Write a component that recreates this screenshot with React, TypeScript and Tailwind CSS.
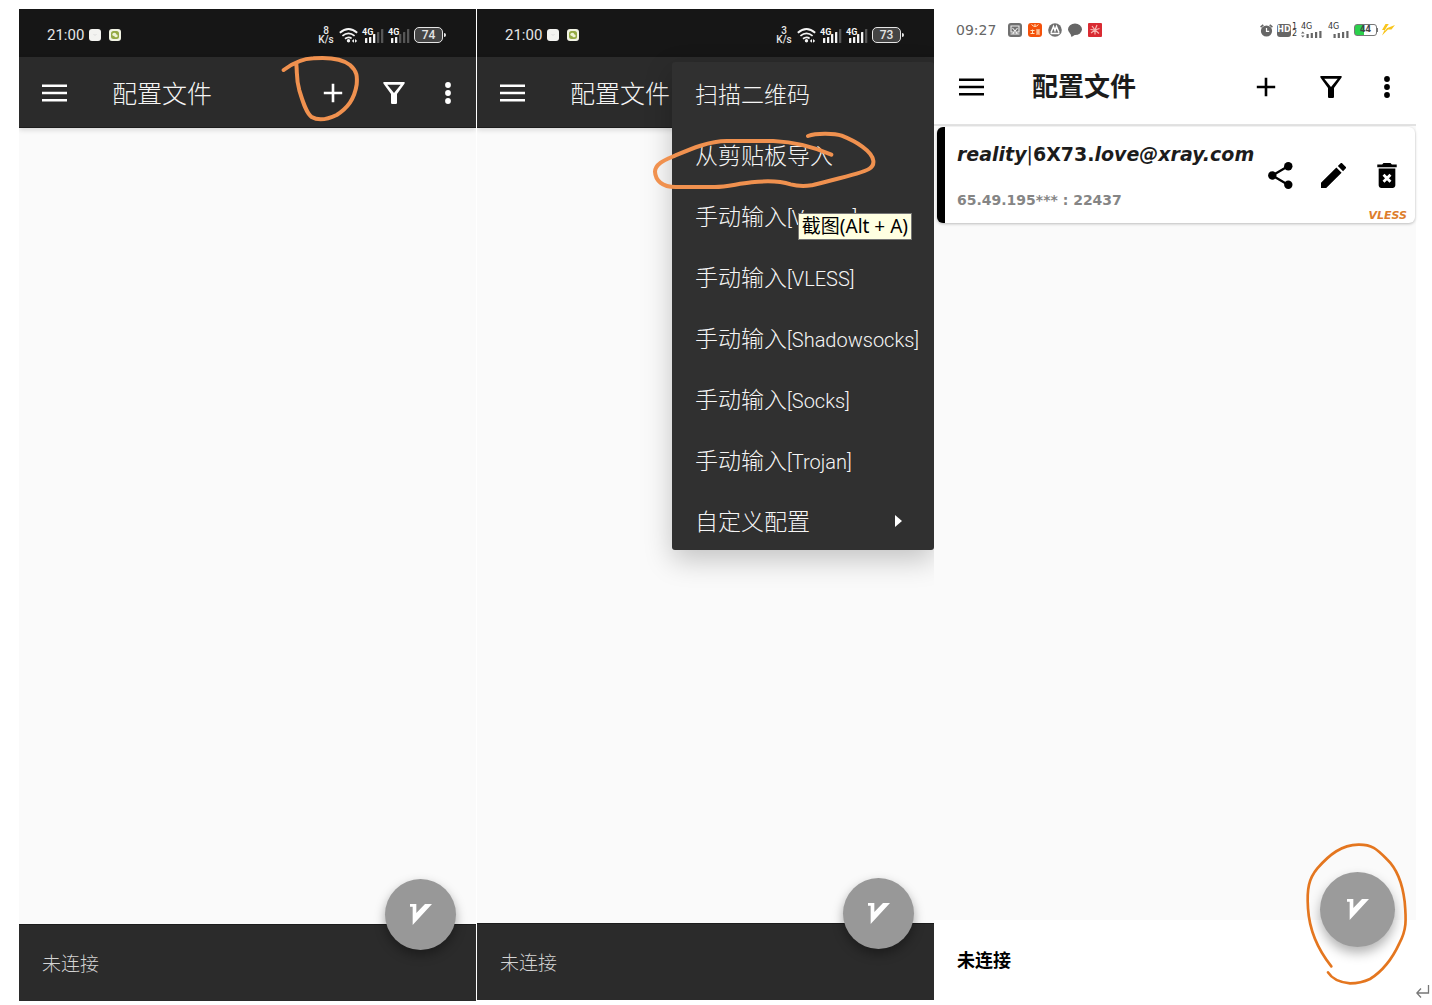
import type { ReactNode } from "react";

const LATIN = "font-['Roboto','Noto_Sans_CJK_SC',sans-serif]";
const BOLD_FACE = "font-['DejaVu_Sans','Noto_Sans_CJK_SC',sans-serif]";

function MenuIcon() {
  return (
    <svg className="w-[26px] h-[18px]" viewBox="0 0 26 18" fill="currentColor" aria-hidden="true">
      <path d="M0 .5h25v2.6H0zM0 7.7h25v2.6H0zM0 14.9h25v2.6H0z" />
    </svg>
  );
}

function PlusIcon() {
  return (
    <svg className="w-5 h-5" viewBox="0 0 20 20" stroke="currentColor" strokeWidth="2.6" aria-hidden="true">
      <path d="M10 .8v18.4M.8 10h18.4" />
    </svg>
  );
}

function FilterIcon() {
  return (
    <svg className="w-[22px] h-[22px]" viewBox="0 0 22 22" fill="currentColor" fillRule="evenodd" aria-hidden="true">
      <path d="M.4 0h21.2v1.6L14 12v9.2l-.8.8H8.8L8 21.200V12L.4 1.600zM4.300 2.700 11 10.900l6.700-8.200z" />
    </svg>
  );
}

function DotsIcon() {
  return (
    <svg className="w-[6px] h-[22px]" viewBox="0 0 6 22" fill="currentColor" aria-hidden="true">
      <circle cx="3" cy="3" r="2.900" />
      <circle cx="3" cy="11" r="2.900" />
      <circle cx="3" cy="19" r="2.900" />
    </svg>
  );
}

function WifiIcon() {
  return (
    <svg className="w-[19px] h-[15px]" viewBox="0 0 19 15" fill="none" stroke="#f4f4f4" strokeWidth="1.800" aria-hidden="true">
      <path d="M.8 4.800Q9.500-2.800 18.200 4.800M3.400 7.900q6.100-5 12.200 0M6 10.800q3.500-2.600 6.600-.4" />
      <circle cx="9.500" cy="12.800" r="1.700" fill="#f4f4f4" stroke="none" />
      <path d="m15 11-2.200 1.900L15 14.800zM16 11l2.200 1.900L16 14.800z" fill="#f4f4f4" stroke="none" />
    </svg>
  );
}

function DarkSignal({ strength }: { strength: number }) {
  const bars = [
    { x: 3, h: 5 },
    { x: 7, h: 6 },
    { x: 11, h: 9 },
    { x: 15, h: 11 },
    { x: 19, h: 14 },
  ];
  return (
    <div className="relative w-[22px] h-[15px]">
      <svg className="w-full h-full" viewBox="0 0 22 15" aria-hidden="true">
        {bars.map((bar, i) => (
          <rect key={bar.x} x={bar.x} y={15 - bar.h} width="2.300" height={bar.h} rx=".5" fill={i < strength ? "#f4f4f4" : "#565656"} />
        ))}
      </svg>
      <span className="absolute left-0 top-0 text-[9px] leading-[8px] font-bold text-neutral-100 bg-[#161616]">4G</span>
    </div>
  );
}

function DarkStatus({ speed, battery, strength }: { speed: string; battery: string; strength: [number, number] }) {
  return (
    <div className="flex h-12 items-center bg-[#161616] pl-7 pr-[30px] pt-1 text-neutral-200">
      <span className="text-[15px]">21:00</span>
      <svg className="ml-[5px] w-3 h-3" viewBox="0 0 12 12" aria-hidden="true">
        <rect width="12" height="12" rx="3" fill="#f3f3f0" />
        <path d="m4.500 5 1.500 1.500L7.500 5" stroke="#ddd" fill="none" />
      </svg>
      <svg className="ml-2 w-3 h-3" viewBox="0 0 12 12" aria-hidden="true">
        <rect width="12" height="12" rx="3" fill="#f1f3e4" />
        <rect x="2" y="2" width="8" height="8" rx="2.500" fill="#95aa45" />
        <ellipse cx="5.300" cy="5.400" rx="2" ry="1.600" fill="#eef3d5" />
        <ellipse cx="7" cy="6.900" rx="1.700" ry="1.300" fill="#eef3d5" />
      </svg>
      <div className="ml-auto flex items-center">
        <div className="flex w-4 flex-col items-center text-[10px] leading-[9px] font-medium">
          <span>{speed}</span>
          <span>K/s</span>
        </div>
        <div className="ml-[5px]"><WifiIcon /></div>
        <div className="ml-1"><DarkSignal strength={strength[0]} /></div>
        <div className="ml-1"><DarkSignal strength={strength[1]} /></div>
        <div className="ml-1 flex items-center">
          <span className="flex h-4 w-[29px] items-center justify-center rounded-[5px] border border-neutral-200 bg-[#444] text-[12px] leading-3 font-medium">
            {battery}
          </span>
          <span className="ml-px h-1 w-[2px] rounded-r bg-neutral-200" />
        </div>
      </div>
    </div>
  );
}

function ConnectButton({ large = false }: { large?: boolean }) {
  return (
    <button
      type="button"
      aria-label="V"
      className={
        large
          ? "absolute right-[21px] bottom-[54px] flex size-[75px] items-center justify-center rounded-full bg-[#9b9b9b] shadow-[0_6px_12px_rgba(0,0,0,0.3)]"
          : "absolute right-5 bottom-[51px] flex size-[71px] items-center justify-center rounded-full bg-[#989898] shadow-[0_5px_11px_rgba(0,0,0,0.35)]"
      }
    >
      <svg className="w-[22px] h-[21px]" viewBox="120 132 66 63" fill="#fff" aria-hidden="true">
        <path d="M120 132h19v27l26-27h21l-58 63v-55h-8z" />
      </svg>
    </button>
  );
}

function DarkPhone({ status, children, className }: { status: ReactNode; children?: ReactNode; className: string }) {
  return (
    <section className={`relative flex min-w-0 flex-[457_1_0%] flex-col overflow-hidden bg-[#fafafa] ${LATIN} ${className}`}>
      {status}
      <header className="flex h-[71px] items-center border-b border-[#1c1c1c] bg-[#2b2b2b] pt-[2px] pl-[23px] pr-[25px] text-white shadow-[0_2px_5px_rgba(0,0,0,0.14)]">
        <button type="button" aria-label="菜单"><MenuIcon /></button>
        <h1 className="ml-11 pt-1 text-[25px] font-light text-neutral-100">配置文件</h1>
        <div className="ml-auto flex items-center">
          <button type="button" aria-label="添加"><PlusIcon /></button>
          <button type="button" aria-label="筛选" className="ml-10"><FilterIcon /></button>
          <button type="button" aria-label="更多" className="ml-10"><DotsIcon /></button>
        </div>
      </header>
      <main className="flex-1" />
      <footer className="flex h-[77px] items-center border-t border-[#1c1c1c] bg-[#2b2b2b] pt-1 pl-[23px] text-[19px] font-light text-neutral-300">
        未连接
      </footer>
      <ConnectButton />
      {children}
    </section>
  );
}

const MENU = [
  { label: "扫描二维码" },
  { label: "从剪贴板导入" },
  { label: "手动输入", kind: "[Vmess]" },
  { label: "手动输入", kind: "[VLESS]" },
  { label: "手动输入", kind: "[Shadowsocks]" },
  { label: "手动输入", kind: "[Socks]" },
  { label: "手动输入", kind: "[Trojan]" },
  { label: "自定义配置", more: true },
];

function AddMenu() {
  return (
    <div className="absolute right-0 top-[53px] w-[262px] rounded-[3px] bg-[#303030] shadow-[0_10px_28px_rgba(0,0,0,0.22)]">
      {MENU.map((item) => (
        <button
          key={item.label + (item.kind ?? "")}
          type="button"
          className="flex h-[61px] w-full items-center whitespace-nowrap pt-[7px] pl-[23px] pr-8 text-[23px] font-light text-neutral-100"
        >
          <span>{item.label}</span>
          {item.kind && <span className="text-[20px]">{item.kind}</span>}
          {item.more && (
            <svg className="mb-1 ml-auto w-[7px] h-3" viewBox="0 0 7 12" fill="#fff" aria-hidden="true">
              <path d="M0 0l7 6-7 6z" />
            </svg>
          )}
        </button>
      ))}
    </div>
  );
}

function LightSignal({ data = false }: { data?: boolean }) {
  return (
    <div className="relative w-[21px] h-[15px]">
      <svg className="w-full h-full" viewBox="0 0 21 15" fill="#666" aria-hidden="true">
        {data && <path d="M0 10.500 1.800 8.500l1.800 2zM0 12.500l1.800 2 1.800-2z" />}
        <rect x="5.500" y="11" width="2.200" height="4" />
        <rect x="9.700" y="10" width="2.200" height="5" />
        <rect x="14" y="9" width="2.200" height="6" />
        <rect x="18.300" y="8" width="2.200" height="7" />
      </svg>
      <span className="absolute left-0 top-0 text-[8px] leading-[8px] text-[#333]">4G</span>
    </div>
  );
}

function LightStatus() {
  return (
    <div className="flex h-[41px] items-center pt-px pl-[22px] pr-[21px] text-[#666]">
      <span className="w-[52px] text-[14px]">09:27</span>
      <div className="flex items-center gap-[6px]">
        <svg className="size-[14px]" viewBox="0 0 14 14" aria-hidden="true">
          <rect width="14" height="14" rx="3" fill="#707070" />
          <path d="M3 3h8v6H3zM4.500 5l5 6M9.500 5l-5 6M2.500 11h9" fill="none" stroke="#eee" strokeWidth="1.100" />
        </svg>
        <svg className="size-[14px]" viewBox="0 0 14 14" aria-hidden="true">
          <rect width="14" height="14" rx="3" fill="#f4510b" />
          <path d="M3.500 1.500q3.500 4 7 0M6 2h2M2.500 7.500h4M4.500 6.500v4M2.500 10.500h4M8 7h4M8 9h4M8 11h4M10 6.500V11" fill="none" stroke="#ffe1bf" />
        </svg>
        <svg className="size-[14px]" viewBox="0 0 14 14" aria-hidden="true">
          <circle cx="7" cy="7" r="6.800" fill="#707070" />
          <path d="m3 9.500 2.500-6 1.500 4 1.500-4 2.500 6M2.500 10.500h9" fill="none" stroke="#fff" strokeWidth="1.500" />
        </svg>
        <svg className="size-[14px]" viewBox="0 0 14 14" fill="#666" aria-hidden="true">
          <ellipse cx="7" cy="6.300" rx="7" ry="5.800" />
          <path d="M2 9.500 3.500 14l4-2.500z" />
        </svg>
        <svg className="size-[14px]" viewBox="0 0 14 14" aria-hidden="true">
          <rect width="14" height="14" rx="1" fill="#d92b32" />
          <path d="M7 7 4 3M7 7l2-5M7 7l4.500-1.500M7 7l4 3.500M7 7v4.500M7 7l-4 3M7 7 2.500 6.500" stroke="#f9b9b4" strokeWidth="1.200" />
        </svg>
      </div>
      <div className="ml-auto flex items-center">
        <svg className="w-[13px] h-[13px]" viewBox="0 0 13 13" aria-hidden="true">
          <circle cx="6.500" cy="7" r="5.600" fill="#666" />
          <path d="M.6 3.200 3.300.8M12.400 3.200 9.700.8" stroke="#666" strokeWidth="1.600" />
          <path d="M6.500 4v3.400h2.700" stroke="#fff" strokeWidth="1.200" fill="none" />
        </svg>
        <span className="ml-1 flex h-[13px] w-[14px] items-center justify-center rounded-[3px] bg-[#666] text-[8px] font-bold text-white">HD</span>
        <span className="ml-px flex flex-col text-[8px] leading-[7px] text-[#333]">
          <span>1</span>
          <span>2</span>
        </span>
        <div className="ml-1"><LightSignal data /></div>
        <div className="ml-[6px]"><LightSignal /></div>
        <span className="ml-[5px] flex h-3 w-[23px] items-center justify-center rounded-[3px] border border-[#777] bg-linear-to-r from-[#2bd04c] from-45% to-white to-45% text-[8px] font-bold leading-[8px] text-[#444]">
          44
        </span>
        <span className="h-1 w-px bg-[#777]" />
        <svg className="ml-1 w-[13px] h-3" viewBox="0 0 13 12" aria-hidden="true">
          <path d="M3.500 0H7L4 4.500 13 1 9.500 5.500H6L0 11.500 2.500 6H0z" fill="#f8c51c" />
          <path d="M7 .3 3 6.500" stroke="#fff" strokeWidth=".8" />
        </svg>
      </div>
    </div>
  );
}

function ProfileCard() {
  return (
    <article className="relative ml-[3px] mr-px mt-px flex h-24 items-center overflow-hidden rounded-md border-l-8 border-black bg-white pl-3 pr-[18px] shadow-[0_1px_3px_rgba(0,0,0,0.25)]">
      <div className="flex flex-col gap-6 whitespace-nowrap pt-[2px]">
        <h2 className="text-[19px] leading-6 font-bold text-[#1c1c1c]">
          <i>reality</i><span className="font-normal">|</span>6X73.<i>love@xray.com</i>
        </h2>
        <p className="text-[14px] leading-5 font-bold text-[#858585]">65.49.195*** : 22437</p>
      </div>
      <div className="ml-auto flex shrink-0 items-center text-black">
        <button type="button" aria-label="分享">
          <svg className="w-[25px] h-[27px]" viewBox="0 0 25 27" fill="currentColor" aria-hidden="true">
            <path d="M20 4.300 4.300 13.500 20 22.700" fill="none" stroke="currentColor" strokeWidth="2.300" />
            <circle cx="20.300" cy="4.300" r="4.200" />
            <circle cx="4.300" cy="13.500" r="4.200" />
            <circle cx="20.300" cy="22.700" r="4.200" />
          </svg>
        </button>
        <button type="button" aria-label="编辑" className="ml-7">
          <svg className="size-[25px]" viewBox="3 3 18 18" fill="currentColor" aria-hidden="true">
            <path d="M3 17.250V21h3.750L17.810 9.940l-3.750-3.750zM20.710 7.040a1 1 0 0 0 0-1.410l-2.340-2.340a1 1 0 0 0-1.410 0l-1.830 1.830 3.750 3.750z" />
          </svg>
        </button>
        <button type="button" aria-label="删除" className="ml-[31px]">
          <svg className="w-5 h-[25px]" viewBox="5 3 14 18" fill="currentColor" aria-hidden="true">
            <path d="M6 19c0 1.100.9 2 2 2h8c1.100 0 2-.9 2-2V7H6zM19 4h-3.500l-1-1h-5l-1 1H5v2h14z" />
            <path d="m9.500 11.500 5 5m0-5-5 5" stroke="#fff" strokeWidth="2" />
          </svg>
        </button>
      </div>
      <span className="absolute bottom-px right-2 text-[11px] leading-3 font-bold italic text-[#dd7d2c]">VLESS</span>
    </article>
  );
}

export default function App() {
  return (
    <div className="flex min-h-screen bg-white pl-[19px] pt-[9px] pb-1">
      <DarkPhone className="mr-px" status={<DarkStatus speed="8" battery="74" strength={[3, 2]} />}>
        <svg className="pointer-events-none absolute right-[116px] top-11 h-[70px] w-20" viewBox="30 160 240 210" fill="none" stroke="#f0914f" strokeWidth="12" strokeLinecap="round" strokeLinejoin="round" aria-hidden="true">
          <path d="M41 211C68 191 95 177 130 176C180 172 215 176 240 196C262 215 262 232 260 255C253 300 232 325 200 346C175 358 145 364 125 352C108 340 98 304 88 272C78 236 82 222 79 194" />
        </svg>
      </DarkPhone>

      <DarkPhone className="mb-px" status={<DarkStatus speed="3" battery="73" strength={[4, 4]} />}>
        <AddMenu />
        <svg className="pointer-events-none absolute right-[54px] top-[119px] h-16 w-[230px]" viewBox="30 384 690 192" fill="none" stroke="#f0914f" strokeWidth="12" strokeLinecap="round" strokeLinejoin="round" aria-hidden="true">
          <path d="M504 408C530 398 585 400 605 407C650 425 696 453 700 482C703 505 680 512 650 521C610 533 560 544 515 556C490 559 470 558 452 553C420 543 370 543 335 547C290 552 260 560 225 561L110 561C65 562 46 540 45 515C46 490 75 480 105 467C145 450 205 423 260 423L400 423C465 426 520 440 574 464" />
        </svg>
        <div role="tooltip" className="absolute right-[22px] top-[204px] whitespace-nowrap border border-[#767676] bg-[#ffffe1] px-[3px] font-['Noto_Sans','Noto_Sans_CJK_SC',sans-serif] text-[19px] leading-[25px] text-black">
          截图(Alt + A)
        </div>
      </DarkPhone>

      <section className={`relative flex min-w-0 flex-[482_1_0%] flex-col bg-white ${BOLD_FACE}`}>
        <LightStatus />
        <header className="flex h-[76px] items-center border-b-2 border-[#e2e2e2] pl-[25px] pr-[26px] text-black">
          <button type="button" aria-label="菜单"><MenuIcon /></button>
          <h1 className="ml-[47px] text-[26px] font-bold text-[#1c1c1c]">配置文件</h1>
          <div className="ml-auto flex items-center">
            <button type="button" aria-label="添加"><PlusIcon /></button>
            <button type="button" aria-label="筛选" className="ml-11"><FilterIcon /></button>
            <button type="button" aria-label="更多" className="ml-[42px]"><DotsIcon /></button>
          </div>
        </header>
        <main className="flex-1 bg-[#fafafa]">
          <ProfileCard />
        </main>
        <footer className="flex h-[81px] items-center bg-white pl-[23px] text-[18px] font-bold text-black">未连接</footer>
        <ConnectButton large />
        <svg className="pointer-events-none absolute right-2 bottom-[11px] h-[150px] w-[105px]" viewBox="39 30 315 450" fill="none" stroke="#e4761f" strokeWidth="8" strokeLinecap="round" strokeLinejoin="round" aria-hidden="true">
          <path d="M124 409C85 360 58 300 54 235C50 175 57 145 82 115C120 72 155 45 205 44C245 43 260 57 290 87C325 120 338 165 344 215C349 270 350 300 328 340C305 390 275 425 240 447C215 459 200 460 180 460C150 457 127 448 114 427" />
        </svg>
      </section>

      <svg className="mb-[2px] h-[14px] w-4 shrink-0 self-end" viewBox="0 0 16 14" fill="none" stroke="#777" strokeWidth="1.300" aria-hidden="true">
        <path d="M12.500 0v8H1M5 3.500.800 8 5 12.500" />
      </svg>
    </div>
  );
}
